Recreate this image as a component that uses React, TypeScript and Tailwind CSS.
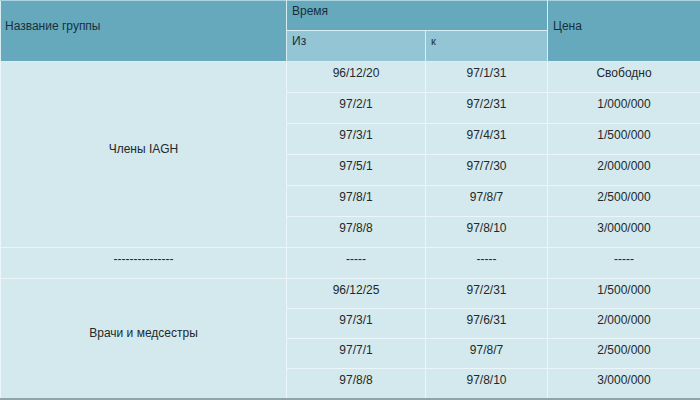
import React from 'react';

const members = [
  ['96/12/20', '97/1/31', 'Свободно'],
  ['97/2/1', '97/2/31', '1/000/000'],
  ['97/3/1', '97/4/31', '1/500/000'],
  ['97/5/1', '97/7/30', '2/000/000'],
  ['97/8/1', '97/8/7', '2/500/000'],
  ['97/8/8', '97/8/10', '3/000/000'],
];

const doctors = [
  ['96/12/25', '97/2/31', '1/500/000'],
  ['97/3/1', '97/6/31', '2/000/000'],
  ['97/7/1', '97/8/7', '2/500/000'],
  ['97/8/8', '97/8/10', '3/000/000'],
];

const cell = 'border border-[#eaf6f9] text-center align-top pt-[5px] leading-[12px]';

const App = () => {
  return (
    <div className="w-[700px] h-[400px] overflow-hidden bg-[#d4e9ee] font-['Liberation_Sans',Arial,sans-serif] text-[12px] text-[#232829]">
      <table className="w-[700px] table-fixed border-collapse border-b-2 border-b-[#8ea5aa]">
        <colgroup>
          <col className="w-[286px]" />
          <col className="w-[139px]" />
          <col className="w-[122px]" />
          <col className="w-[153px]" />
        </colgroup>
        <thead className="text-[#16303c]">
          <tr className="h-[30px]">
            <th rowSpan={2} className="border border-[#d9eef3] border-t-[#a9d3df] bg-[#67a9bc] text-left font-normal align-top pt-[19px] px-[4px] leading-[12px]">
              Название группы
            </th>
            <th colSpan={2} className="border border-[#d9eef3] border-t-[#a9d3df] bg-[#67a9bc] text-left font-normal align-top pt-[4px] px-[5px] leading-[12px]">
              Время
            </th>
            <th rowSpan={2} className="border border-[#d9eef3] border-t-[#a9d3df] bg-[#67a9bc] text-left font-normal align-top pt-[19px] px-[5px] leading-[12px]">
              Цена
            </th>
          </tr>
          <tr className="h-[31px]">
            <th className="border border-[#d9eef3] bg-[#93c5d5] text-left font-normal align-top pt-[4px] px-[5px] leading-[12px]">
              Из
            </th>
            <th className="border border-[#d9eef3] bg-[#93c5d5] text-left font-normal align-top pt-[4px] px-[5px] leading-[12px] text-[11px]">
              к
            </th>
          </tr>
        </thead>
        <tbody>
          {members.map((r, i) => (
            <tr key={'m' + i} className="h-[31px]">
              {i === 0 && (
                <td rowSpan={6} className="border border-[#eaf6f9] text-center align-middle pb-[12px] leading-[12px]">
                  Члены IAGH
                </td>
              )}
              {r.map((v, j) => (
                <td key={j} className={cell}>
                  {v}
                </td>
              ))}
            </tr>
          ))}
          <tr className="h-[31px]">
            <td className={cell}>---------------</td>
            <td className={cell}>-----</td>
            <td className={cell}>-----</td>
            <td className={cell}>-----</td>
          </tr>
          {doctors.map((r, i) => (
            <tr key={'d' + i} className="h-[30px]">
              {i === 0 && (
                <td rowSpan={4} className="border border-[#eaf6f9] text-center align-middle pb-[10px] leading-[12px]">
                  Врачи и медсестры
                </td>
              )}
              {r.map((v, j) => (
                <td key={j} className={cell}>
                  {v}
                </td>
              ))}
            </tr>
          ))}
        </tbody>
      </table>
    </div>
  );
};

export default App;
